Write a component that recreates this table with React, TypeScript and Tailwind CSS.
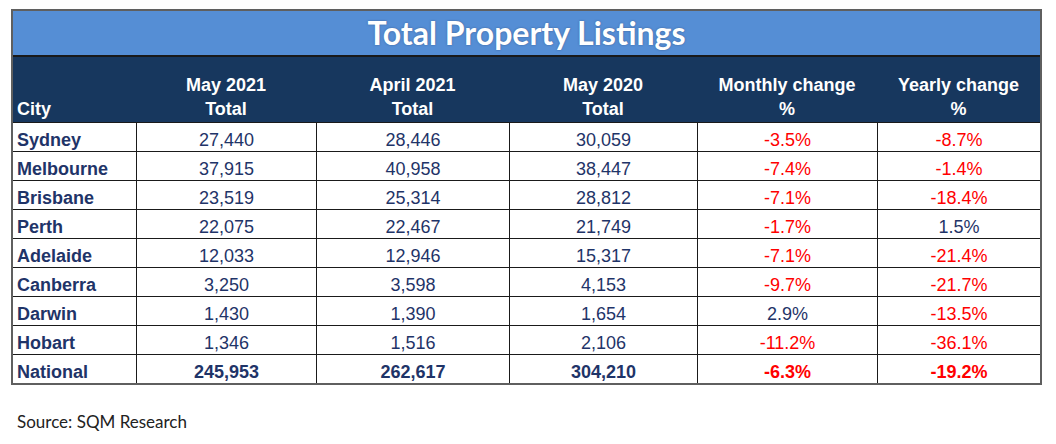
import * as React from "react";

type Row = {
  city: string;
  may21: string;
  apr21: string;
  may20: string;
  monthly: string;
  yearly: string;
  bold?: boolean;
};

const rows: Row[] = [
  { city: "Sydney", may21: "27,440", apr21: "28,446", may20: "30,059", monthly: "-3.5%", yearly: "-8.7%" },
  { city: "Melbourne", may21: "37,915", apr21: "40,958", may20: "38,447", monthly: "-7.4%", yearly: "-1.4%" },
  { city: "Brisbane", may21: "23,519", apr21: "25,314", may20: "28,812", monthly: "-7.1%", yearly: "-18.4%" },
  { city: "Perth", may21: "22,075", apr21: "22,467", may20: "21,749", monthly: "-1.7%", yearly: "1.5%" },
  { city: "Adelaide", may21: "12,033", apr21: "12,946", may20: "15,317", monthly: "-7.1%", yearly: "-21.4%" },
  { city: "Canberra", may21: "3,250", apr21: "3,598", may20: "4,153", monthly: "-9.7%", yearly: "-21.7%" },
  { city: "Darwin", may21: "1,430", apr21: "1,390", may20: "1,654", monthly: "2.9%", yearly: "-13.5%" },
  { city: "Hobart", may21: "1,346", apr21: "1,516", may20: "2,106", monthly: "-11.2%", yearly: "-36.1%" },
  { city: "National", may21: "245,953", apr21: "262,617", may20: "304,210", monthly: "-6.3%", yearly: "-19.2%", bold: true },
];

const cols = "grid grid-cols-[123px_180px_193px_188px_180px_163px]";

// negative values are red, positive stay navy
const pctColor = (v: string) => (v.startsWith("-") ? "text-[#ff0000]" : "text-[#1f3468]");

function Cell({ children, className = "" }: { children: React.ReactNode; className?: string }) {
  return (
    <div className={`flex h-[28px] items-end justify-center leading-[21px] ${className}`}>
      {children}
    </div>
  );
}

export default function App() {
  return (
    <div className="h-[444px] w-[1056px] bg-white font-['Liberation_Sans',Arial,sans-serif]">
      <div className="ml-[11px] pt-[9px]">
        <div className="w-[1031px] border-2 border-[#5f5f5f]">
          {/* Title band */}
          <div className="flex h-[44px] items-center justify-center bg-[#558ed5] font-['Lato',sans-serif] text-[32px] font-bold text-white [text-shadow:0_0_2px_rgba(40,60,100,0.6)]">
            Total Property Listings
          </div>

          {/* Column headings */}
          <div className={`${cols} h-[67px] border-t-2 border-[#1a1a1a] bg-[#17375e] text-[18px] font-bold leading-[24px] text-white`}>
            <div className="flex items-end pb-px pl-[4px]">City</div>
            <div className="flex flex-col items-center justify-end pb-px">
              <span>May 2021</span>
              <span>Total</span>
            </div>
            <div className="flex flex-col items-center justify-end pb-px">
              <span>April 2021</span>
              <span>Total</span>
            </div>
            <div className="flex flex-col items-center justify-end pb-px">
              <span>May 2020</span>
              <span>Total</span>
            </div>
            <div className="flex flex-col items-center justify-end pb-px">
              <span>Monthly change</span>
              <span>%</span>
            </div>
            <div className="flex flex-col items-center justify-end pb-px">
              <span>Yearly change</span>
              <span>%</span>
            </div>
          </div>

          {/* Data rows */}
          {rows.map((r) => (
            <div
              key={r.city}
              className={`${cols} border-t border-[#1a1a1a] text-[18px] ${r.bold ? "font-bold" : ""}`}
            >
              <Cell className="justify-start pl-[4px] font-bold text-[#1f3468]">{r.city}</Cell>
              <Cell className="border-l border-[#1a1a1a] text-[#1f3468]">{r.may21}</Cell>
              <Cell className="border-l border-[#1a1a1a] text-[#1f3468]">{r.apr21}</Cell>
              <Cell className="border-l border-[#1a1a1a] text-[#1f3468]">{r.may20}</Cell>
              <Cell className={`border-l border-[#1a1a1a] ${pctColor(r.monthly)}`}>{r.monthly}</Cell>
              <Cell className={`border-l border-[#1a1a1a] ${pctColor(r.yearly)}`}>{r.yearly}</Cell>
            </div>
          ))}
        </div>
      </div>

      <p className="ml-[17px] mt-[27px] font-['Lato',sans-serif] text-[17px] leading-[20px] text-[#222]">
        Source: SQM Research
      </p>
    </div>
  );
}
